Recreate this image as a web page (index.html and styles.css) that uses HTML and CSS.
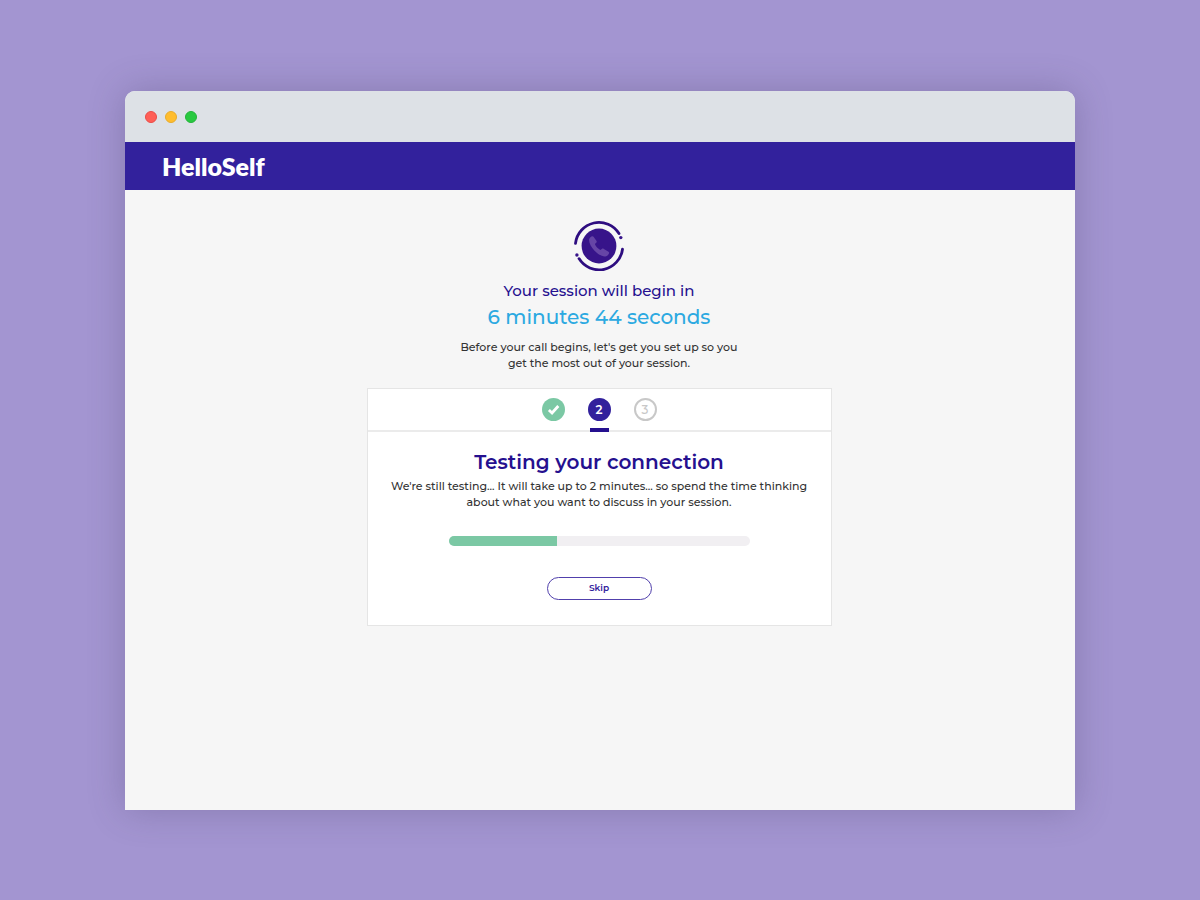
FILE: index.html
```html
<!DOCTYPE html>
<html lang="en">
<head>
  <meta charset="utf-8">
  <meta name="viewport" content="width=device-width, initial-scale=1">
  <title>HelloSelf</title>
  <link rel="stylesheet" href="styles.css">
</head>
<body>

  <div class="window">
    <div class="titlebar">
      <span class="dot red"></span>
      <span class="dot yellow"></span>
      <span class="dot green"></span>
    </div>

    <header class="header">
      <a class="logo" href="#">HelloSelf</a>
    </header>

    <main class="content">
      <svg class="call-icon" viewBox="0 0 50 50" aria-hidden="true">
        <circle cx="25" cy="25" r="17.4" fill="#37148a"/>
        <g fill="none" stroke="#2e0d80" stroke-width="2.8" stroke-linecap="round">
          <path d="M1.5 22.3A23.6 23.6 0 0 1 45 12.6"/>
          <path d="M48.5 28.2A23.6 23.6 0 0 1 5 37.6"/>
        </g>
        <circle cx="46.8" cy="16.6" r="1.7" fill="#37148a"/>
        <circle cx="2.9" cy="34" r="1.7" fill="#37148a"/>
        <path fill="#6645a6" d="M15.2 18.2C15.5 16.8 17.1 15.4 18.3 15.2C18.9 15.1 19.3 15.4 19.7 16L22.4 19.8C22.9 20.6 22.8 21.2 22.2 21.8L20.9 23.1C21.6 25.3 24.1 28 26.3 29L27.8 27.9C28.5 27.4 29.2 27.4 29.9 27.9L34.5 30.7C35.2 31.2 35.3 31.8 35 32.5C34.3 34.1 32.7 35.3 31.3 35.4C28.2 35.7 23.5 32.9 20.3 29.4C17.2 26.1 14.5 21.5 15.2 18.2Z"/>
      </svg>

      <h1 class="session-title">Your session will begin in</h1>
      <p class="countdown">6 minutes 44 seconds</p>
      <p class="intro">Before your call begins, let's get you set up so you<br>get the most out of your session.</p>

      <section class="card">
        <ol class="steps">
          <li class="step done">
            <svg viewBox="0 0 22 22" role="img" aria-label="Step 1 done">
              <path d="M6.6 11.4L9.6 14.3L15.6 7.7" fill="none" stroke="#fff" stroke-width="2.7"/>
            </svg>
          </li>
          <li class="step active" aria-current="step">2</li>
          <li class="step">3</li>
        </ol>

        <div class="card-body">
          <h2 class="card-title" id="test-title">Testing your connection</h2>
          <p class="card-text">We're still testing... It will take up to 2 minutes... so spend the time thinking about what you want to discuss in your session.</p>
          <progress class="progress" value="36" max="100" aria-labelledby="test-title"></progress>
          <button class="skip" type="button">Skip</button>
        </div>
      </section>
    </main>
  </div>

</body>
</html>
```

FILE: styles.css
```css
* { box-sizing: border-box; }

body {
  display: flex;
  min-height: 100vh;
  margin: 0;
  padding: 91px 125px 90px;
  background: #a395d1;
  color: #333;
  font-family: Montserrat, Inter, sans-serif;
}

h1, h2, p, ol { margin: 0; padding: 0; }

/* browser window */
.window {
  flex: 1;
  display: flex;
  flex-direction: column;
  overflow: hidden;
  border-radius: 10px 10px 0 0;
  background: #f6f6f6;
  box-shadow: 0 0 36px rgba(70, 60, 100, 0.3);
}
.titlebar {
  display: flex;
  align-items: center;
  gap: 8px;
  height: 51px;
  padding: 0 20px;
  background: #dde1e6;
}
.dot { width: 12px; height: 12px; border: 1px solid; border-radius: 50%; }
.red { background: #ff5f57; border-color: #ea4c48; }
.yellow { background: #ffbd2e; border-color: #e8ac2b; }
.green { background: #28c940; border-color: #24b33a; }

.header {
  display: flex;
  align-items: center;
  height: 48px;
  padding: 0 37px;
  background: #32219c;
}
.logo {
  color: #fff;
  font-family: Lato, sans-serif;
  font-size: 25px;
  font-weight: 800;
  line-height: 28px;
  text-decoration: none;
}

/* session info */
.content {
  display: flex;
  flex-direction: column;
  align-items: center;
  padding: 31px 18px 31px 16px;
  text-align: center;
}
.call-icon { width: 50px; height: 50px; }
.session-title {
  margin-top: 8px;
  color: #25108f;
  font-size: 15px;
  font-weight: 500;
  line-height: 24px;
}
.countdown { color: #2ca9e1; font-size: 20px; font-weight: 500; line-height: 28px; }
.intro { margin-top: 8px; font-size: 11px; font-weight: 500; line-height: 16px; }

/* steps card */
.card {
  width: 100%;
  max-width: 465px;
  margin-top: 17px;
  border: 1px solid #e5e5e5;
  background: #fff;
}
.steps {
  display: flex;
  justify-content: center;
  gap: 23px;
  padding: 9px 0;
  border-bottom: 2px solid #ebebeb;
  list-style: none;
}
.step {
  position: relative;
  width: 23px;
  height: 23px;
  border: 2px solid #c8c8c8;
  border-radius: 50%;
  color: #c8c8c8;
  font-size: 12px;
  font-weight: 500;
  line-height: 19px;
}
.step.done { border: 0; background: #7bc8a4; }
.step.done svg { display: block; }
.step.active { border-color: #32219c; background: #32219c; color: #fff; font-weight: 600; }
.step.active::after {
  content: "";
  position: absolute;
  left: 0;
  bottom: -13px;
  width: 19px;
  height: 4px;
  background: #25108f;
}
.card-body {
  display: flex;
  flex-direction: column;
  align-items: center;
  padding: 16px 16px 25px;
}
.card-title { color: #25108f; font-size: 20px; font-weight: 600; line-height: 28px; }
.card-text { margin-top: 2px; font-size: 11px; font-weight: 500; line-height: 16px; }

.progress {
  appearance: none;
  width: 100%;
  max-width: 301px;
  height: 10px;
  margin-top: 26px;
  overflow: hidden;
  border: 0;
  border-radius: 5px;
  background: #f1eff2;
}
.progress::-webkit-progress-bar { background: #f1eff2; }
.progress::-webkit-progress-value { background: #7bc8a4; }
.progress::-moz-progress-bar { background: #7bc8a4; }

.skip {
  width: 105px;
  height: 23px;
  margin-top: 31px;
  padding: 0 0 2px;
  border: 1px solid #5140ac;
  border-radius: 12px;
  background: #fff;
  color: #32219c;
  font-family: inherit;
  font-size: 9px;
  font-weight: 600;
}
```
